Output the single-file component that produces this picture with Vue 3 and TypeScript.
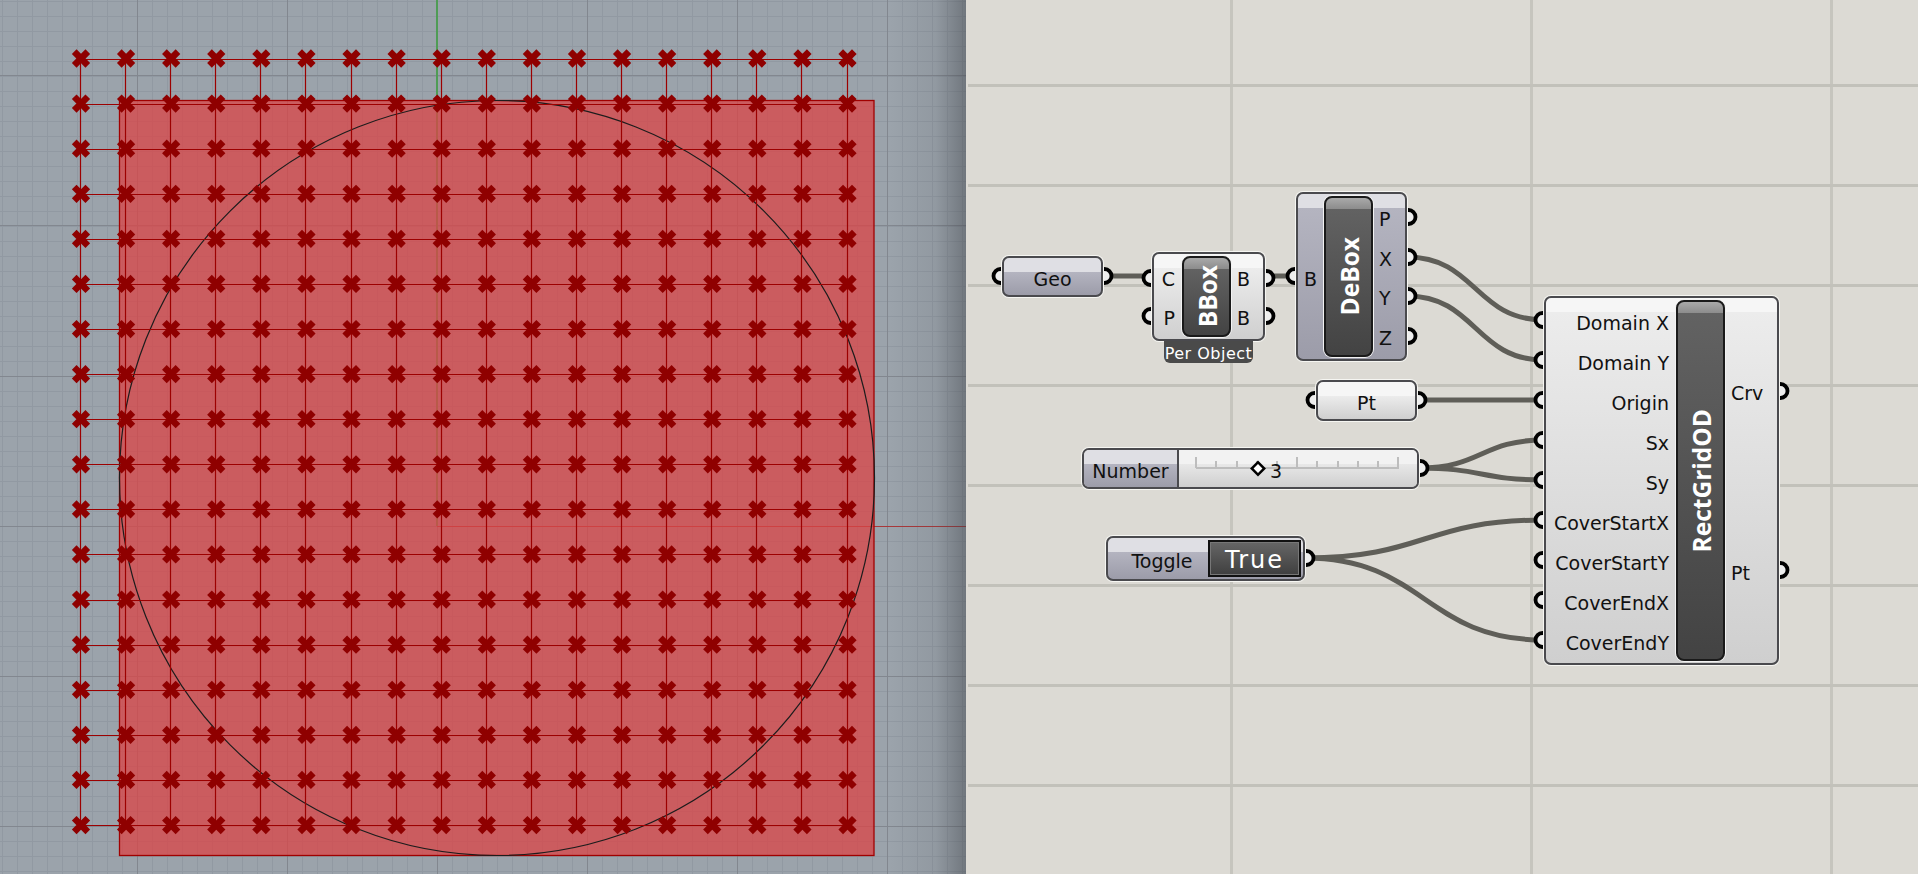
<script setup lang="ts">
// Rhino viewport on the left, Grasshopper definition on the right.
interface GhNode {
  name: string
  tone: 'light' | 'grey'
  left: number
  top: number
  width: number
  height: number
  inputWidth: number
  rowHeight: number
  inputs: string[]
  outputs: string[]
  outputHeight?: number
  tag?: string
}

const step = 45.09
const columns = Array.from({ length: 18 }, (_, i) => 81 + i * step)
const rows = Array.from({ length: 18 }, (_, i) => 58.5 + i * step)

const minorX = Array.from({ length: 65 }, (_, i) => 2 + i * 15)
const minorY = Array.from({ length: 59 }, (_, i) => 1 + i * 15)
const majorX = [137, 287, 437, 587, 737, 887]
const majorY = [75, 225, 376, 526, 676, 826]

const canvasX = 966

const nodes: GhNode[] = [
  {
    name: 'BBox',
    tone: 'light',
    left: 1152,
    top: 252,
    width: 113,
    height: 89,
    inputWidth: 28,
    rowHeight: 38.5,
    inputs: ['C', 'P'],
    outputs: ['B', 'B'],
    tag: 'Per Object',
  },
  {
    name: 'DeBox',
    tone: 'grey',
    left: 1296,
    top: 192,
    width: 111,
    height: 169,
    inputWidth: 26,
    rowHeight: 39.7,
    inputs: ['B'],
    outputs: ['P', 'X', 'Y', 'Z'],
  },
  {
    name: 'RectGridOD',
    tone: 'light',
    left: 1544,
    top: 296,
    width: 235,
    height: 369,
    inputWidth: 130,
    rowHeight: 40,
    outputHeight: 180,
    inputs: [
      'Domain X',
      'Domain Y',
      'Origin',
      'Sx',
      'Sy',
      'CoverStartX',
      'CoverStartY',
      'CoverEndX',
      'CoverEndY',
    ],
    outputs: ['Crv', 'Pt'],
  },
]

// [edge x, y, direction]: the ring sits slightly outside the node edge
const ports: [number, number, number][] = [
  [1002, 276, -1], [1103, 276, 1],
  [1152, 278, -1], [1152, 316, -1], [1265, 278, 1], [1265, 316, 1],
  [1296, 276, -1],
  [1407, 217, 1], [1407, 257, 1], [1407, 296, 1], [1407, 336, 1],
  [1316, 400, -1], [1417, 400, 1],
  [1419, 468, 1],
  [1305, 558, 1],
  ...Array.from({ length: 9 }, (_, i): [number, number, number] => [1544, 320 + i * 40, -1]),
  [1779, 391, 1], [1779, 570, 1],
]

function wire(x1: number, y1: number, x2: number, y2: number): string {
  const mid = (x2 - x1) * 0.5
  return `M${x1} ${y1}C${x1 + mid} ${y1} ${x2 - mid} ${y2} ${x2} ${y2}`
}

const wires = [
  wire(1103, 276, 1152, 276),
  wire(1265, 276, 1296, 276),
  wire(1407, 257, 1544, 320),
  wire(1407, 296, 1544, 360),
  wire(1417, 400, 1544, 400),
  wire(1419, 468, 1544, 440),
  wire(1419, 468, 1544, 480),
  wire(1305, 558, 1544, 520),
  wire(1305, 558, 1544, 640),
]

const ticks = [1197, 1217, 1238, 1258, 1278, 1298, 1318, 1339, 1359, 1379, 1399]

function box(n: { left: number; top: number; width: number; height: number }) {
  return {
    left: `${n.left - canvasX}px`,
    top: `${n.top}px`,
    width: `${n.width}px`,
    height: `${n.height}px`,
  }
}

const panelVLines = [264, 564, 864]
const panelHLines = [84, 184, 284, 384, 484, 584, 684, 784]
</script>

<template>
  <div class="app">
    <div class="viewport">
      <svg width="966" height="874" viewBox="0 0 966 874">
        <defs>
          <linearGradient id="edge" x1="0" x2="1" y1="0" y2="0">
            <stop offset="0" stop-color="#3c4046" stop-opacity="0" />
            <stop offset="0.6" stop-color="#3c4046" stop-opacity="0.1" />
            <stop offset="1" stop-color="#3c4046" stop-opacity="0.45" />
          </linearGradient>
        </defs>
        <rect width="966" height="874" fill="#9ba3ab" />
        <g stroke="#9199a2" stroke-width="1">
          <line v-for="x in minorX" :key="'mx' + x" :x1="x + 0.5" y1="0" :x2="x + 0.5" y2="874" />
          <line v-for="y in minorY" :key="'my' + y" x1="0" :y1="y + 0.5" x2="966" :y2="y + 0.5" />
        </g>
        <g stroke="#82878f" stroke-width="1">
          <line v-for="x in majorX" :key="'Mx' + x" :x1="x + 0.5" y1="0" :x2="x + 0.5" y2="874" />
          <line v-for="y in majorY" :key="'My' + y" x1="0" :y1="y + 0.5" x2="966" :y2="y + 0.5" />
        </g>
        <line x1="437" y1="0" x2="437" y2="526" stroke="#4f9c55" stroke-width="2" />
        <line x1="437" y1="526.5" x2="966" y2="526.5" stroke="#a8383a" stroke-width="1" />
        <rect x="890" width="76" height="874" fill="url(#edge)" />

        <rect x="119.5" y="100.5" width="754.5" height="755" fill="#db4445" fill-opacity="0.75" />
        <rect x="119.5" y="100.5" width="754.5" height="755" fill="none" stroke="#a00000" stroke-width="1.3" />

        <circle cx="497" cy="478" r="377.5" fill="none" stroke="#1c1c1c" stroke-width="1.2" />

        <g stroke="#9c0000" stroke-width="1.2">
          <line
            v-for="x in columns"
            :key="'c' + x"
            :x1="Math.round(x) - 0.5"
            :y1="rows[0]"
            :x2="Math.round(x) - 0.5"
            :y2="rows[17]"
          />
          <line
            v-for="y in rows"
            :key="'r' + y"
            :x1="columns[0]"
            :y1="Math.round(y) + 0.5"
            :x2="columns[17]"
            :y2="Math.round(y) + 0.5"
          />
        </g>

        <g v-for="x in columns" :key="'px' + x">
          <path
            v-for="y in rows"
            :key="y"
            :transform="`translate(${x} ${y})`"
            d="M-6.8 -6.8L6.8 6.8M-6.8 6.8L6.8 -6.8"
            stroke="#8f0000"
            stroke-width="6.6"
            fill="none"
          />
        </g>
      </svg>
    </div>

    <div class="canvas">
      <div v-for="x in panelVLines" :key="'v' + x" class="grid-v" :style="{ left: `${x}px` }"></div>
      <div v-for="y in panelHLines" :key="'h' + y" class="grid-h" :style="{ top: `${y}px` }"></div>

      <svg class="wires" width="952" height="874" viewBox="966 0 952 874">
        <path v-for="(d, i) in wires" :key="i" :d="d" fill="none" stroke="#5f5e58" stroke-width="5" />
        <circle
          v-for="(p, i) in ports"
          :key="'p' + i"
          :cx="p[0] + p[2] * 1.5"
          :cy="p[1]"
          r="7"
          fill="#eeeeee"
          stroke="#000"
          stroke-width="3.8"
        />
      </svg>

      <div class="node simple grey" :style="box({ left: 1002, top: 256, width: 101, height: 41 })">Geo</div>
      <div class="node simple light" :style="box({ left: 1316, top: 380, width: 101, height: 41 })">Pt</div>

      <div
        v-for="node in nodes"
        :key="node.name"
        class="node component"
        :class="node.tone"
        :style="box(node)"
      >
        <div class="params inputs" :style="{ flexBasis: `${node.inputWidth}px` }">
          <span v-for="p in node.inputs" :key="p" :style="{ height: `${node.rowHeight}px` }">{{ p }}</span>
        </div>
        <div class="capsule">
          <span>{{ node.name }}</span>
        </div>
        <div class="params outputs">
          <span
            v-for="(p, i) in node.outputs"
            :key="i"
            :style="{ height: `${node.outputHeight ?? node.rowHeight}px` }"
          >{{ p }}</span>
        </div>
        <div v-if="node.tag" class="tag">{{ node.tag }}</div>
      </div>

      <div class="node slider" :style="box({ left: 1082, top: 448, width: 337, height: 41 })">
        <div class="slider-name">Number</div>
        <div class="slider-track">
          <svg width="241" height="41" viewBox="1178 448 241 41">
            <g stroke="#bdbdbd" stroke-width="2" fill="none">
              <line x1="1197" y1="468" x2="1400" y2="468" />
              <line
                v-for="(t, i) in ticks"
                :key="t"
                :x1="t"
                :y1="i === 0 || i === 5 || i === 10 ? 457 : 461"
                :x2="t"
                y2="468"
              />
            </g>
            <rect
              x="-4.4"
              y="-4.4"
              width="8.8"
              height="8.8"
              transform="translate(1259 468.5) rotate(45)"
              fill="#fff"
              stroke="#000"
              stroke-width="2.5"
            />
          </svg>
          <span class="slider-value">3</span>
        </div>
      </div>

      <div class="node toggle grey" :style="box({ left: 1106, top: 536, width: 199, height: 45 })">
        <span class="toggle-name">Toggle</span>
        <span class="toggle-state">True</span>
      </div>
    </div>
  </div>
</template>

<style>
html,
body {
  margin: 0;
  overflow: hidden;
}
</style>

<style scoped>
.app {
  display: flex;
  width: 1918px;
  height: 874px;
  overflow: hidden;
  font-family: "DejaVu Sans", sans-serif;
  color: #111;
}
.viewport {
  flex: 0 0 966px;
  height: 874px;
}
.viewport svg {
  display: block;
}
.canvas {
  position: relative;
  flex: 1;
  height: 874px;
  background: #dcdad4;
  overflow: hidden;
}
.grid-v {
  position: absolute;
  top: 0;
  bottom: 0;
  width: 3px;
  background: #c6c5be;
}
.grid-h {
  position: absolute;
  left: 2px;
  right: 0;
  height: 3px;
  background: #c2c1ba;
}
.wires {
  position: absolute;
  left: 0;
  top: 0;
}
.node {
  position: absolute;
  box-sizing: border-box;
  border: 2px solid #4a4a4e;
  border-radius: 7px;
  box-shadow: 0 0 0 1px #f6f6f2;
  font-size: 19px;
  line-height: 1;
}
.node.light {
  background: linear-gradient(#f6f6f6 0, #f6f6f6 14px, #ececec 14px, #cfcfcf 100%);
}
.node.grey {
  background: linear-gradient(#dfdfe4 0, #dfdfe4 14px, #b4b4c0 14px, #9c9ca9 100%);
}
.simple {
  display: flex;
  align-items: center;
  justify-content: center;
  padding-top: 5px;
}
.component {
  display: flex;
  align-items: stretch;
  padding: 2px 0;
}
.params {
  flex: 1;
  display: flex;
  flex-direction: column;
  justify-content: center;
}
.params span {
  box-sizing: border-box;
  display: flex;
  align-items: center;
  padding-top: 5px;
}
.inputs {
  flex-grow: 0;
  flex-shrink: 0;
  align-items: flex-end;
  padding-right: 7px;
  box-sizing: border-box;
  white-space: nowrap;
}
.outputs {
  align-items: flex-start;
  padding-left: 6px;
}
.capsule {
  flex: 0 0 49px;
  box-sizing: border-box;
  padding-left: 3px;
  display: flex;
  align-items: center;
  justify-content: center;
  border: 2px solid #1a1a1a;
  border-radius: 8px;
  background: linear-gradient(#a9a9a9 0, #8c8c8c 11px, #626262 11px, #434343 100%);
  box-shadow: 0 0 0 1px #f2f2f2;
}
.capsule span {
  writing-mode: vertical-rl;
  transform: rotate(180deg);
  font-family: "Open Sans", sans-serif;
  font-weight: 700;
  font-size: 24.5px;
  color: #fff;
}
.tag {
  position: absolute;
  left: 10px;
  top: 87px;
  width: 89px;
  height: 22px;
  box-sizing: border-box;
  padding-top: 3px;
  display: flex;
  align-items: center;
  justify-content: center;
  background: #4a4a4a;
  border-radius: 0 0 6px 6px;
  color: #fff;
  font-size: 16px;
  letter-spacing: 0.5px;
}
.slider {
  display: flex;
}
.slider-name {
  flex: 0 0 95px;
  display: flex;
  align-items: center;
  justify-content: center;
  box-sizing: border-box;
  padding-top: 5px;
  border-right: 2px solid #4a4a4e;
  border-radius: 5px 0 0 5px;
  background: linear-gradient(#dfdfe4 0, #dfdfe4 14px, #b4b4c0 14px, #9c9ca9 100%);
}
.slider-track {
  flex: 1;
  position: relative;
  overflow: hidden;
  border-radius: 0 5px 5px 0;
  background: linear-gradient(#f2f2f2 0, #f2f2f2 14px, #e8e8e8 14px, #cfcfcf 100%);
}
.slider-track svg {
  display: block;
  margin-top: -2px;
  margin-left: -2px;
}
.slider-value {
  position: absolute;
  left: 91px;
  top: 12px;
}
.toggle {
  display: flex;
  align-items: center;
  padding: 2px;
}
.toggle-name {
  flex: 1;
  text-align: center;
  padding-left: 6px;
  padding-top: 5px;
}
.toggle-state {
  box-sizing: border-box;
  flex: 0 0 93px;
  height: 37px;
  padding-top: 3px;
  display: flex;
  align-items: center;
  justify-content: center;
  border: 2px solid #111;
  background: linear-gradient(#666 0, #3f3f3f 100%);
  color: #fff;
  font-size: 24px;
  letter-spacing: 2px;
  box-shadow: inset 0 0 0 1px #777;
}
</style>
